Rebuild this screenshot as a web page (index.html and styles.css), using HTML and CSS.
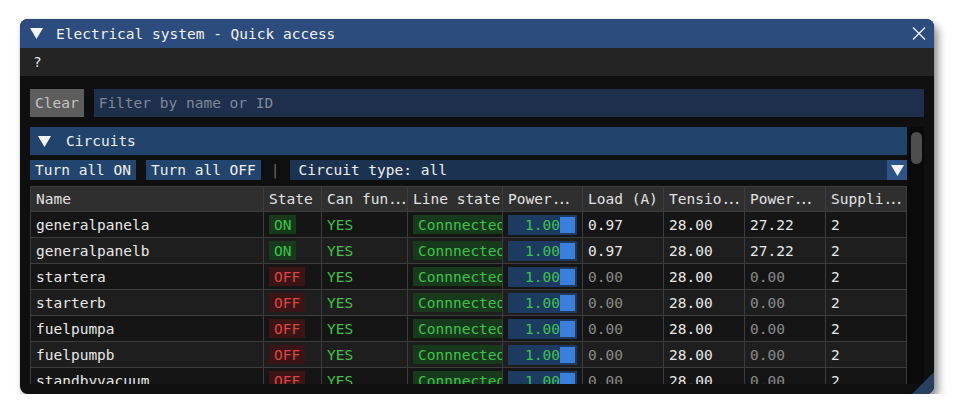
FILE: index.html
```html
<!DOCTYPE html>
<html>
<head>
<meta charset="utf-8">
<link rel="stylesheet" href="styles.css">
</head>
<body>
<div class="page">
  <div class="window">
    <div class="titlebar">
      <svg class="tri" width="13" height="11" viewBox="0 0 13 11"><polygon points="0,0 13,0 6.5,11" fill="#f4f4f4"/></svg>
      <span class="title">Electrical system - Quick access</span>
      <svg class="close" width="14" height="13" viewBox="0 0 14 13"><path d="M1 0.5 L13 12.5 M13 0.5 L1 12.5" stroke="#f0f0f0" stroke-width="1.3" fill="none"/></svg>
    </div>
    <div class="menubar"><span>?</span></div>
    <div class="content">
      <div class="filter-row">
        <div class="btn-clear">Clear</div>
        <div class="filter-input">Filter by name or ID</div>
      </div>
      <div class="child">
        <div class="child-main">
          <div class="section-header">
            <svg class="tri" width="13" height="11" viewBox="0 0 13 11"><polygon points="0,0 13,0 6.5,11" fill="#f4f4f4"/></svg>
            <span class="section-title">Circuits</span>
          </div>
          <div class="toolbar">
            <div class="tbtn">Turn all ON</div>
            <div class="tbtn">Turn all OFF</div>
            <div class="sep">|</div>
            <div class="combo">
              <div class="combo-label">Circuit type: all</div>
              <div class="combo-arrow"><svg width="13" height="11" viewBox="0 0 13 11"><polygon points="0,0 13,0 6.5,11" fill="#f4f4f4"/></svg></div>
            </div>
          </div>
          <div class="table">
            <div class="row head">
              <div class="cell">Name</div>
              <div class="cell">State</div>
              <div class="cell">Can fun<span class="ell">...</span></div>
              <div class="cell">Line state</div>
              <div class="cell">Power<span class="ell">...</span></div>
              <div class="cell">Load (A)</div>
              <div class="cell">Tensio<span class="ell">...</span></div>
              <div class="cell">Power<span class="ell">...</span></div>
              <div class="cell">Suppli<span class="ell">...</span></div>
            </div>
            <div class="row odd">
              <div class="cell">generalpanela</div>
              <div class="cell"><span class="badge on">ON</span></div>
              <div class="cell green">YES</div>
              <div class="cell"><span class="badge conn">Connnected</span></div>
              <div class="cell"><div class="slider">1.00<span class="handle"></span></div></div>
              <div class="cell">0.97</div>
              <div class="cell">28.00</div>
              <div class="cell">27.22</div>
              <div class="cell">2</div>
            </div>
            <div class="row even">
              <div class="cell">generalpanelb</div>
              <div class="cell"><span class="badge on">ON</span></div>
              <div class="cell green">YES</div>
              <div class="cell"><span class="badge conn">Connnected</span></div>
              <div class="cell"><div class="slider">1.00<span class="handle"></span></div></div>
              <div class="cell">0.97</div>
              <div class="cell">28.00</div>
              <div class="cell">27.22</div>
              <div class="cell">2</div>
            </div>
            <div class="row odd">
              <div class="cell">startera</div>
              <div class="cell"><span class="badge off">OFF</span></div>
              <div class="cell green">YES</div>
              <div class="cell"><span class="badge conn">Connnected</span></div>
              <div class="cell"><div class="slider">1.00<span class="handle"></span></div></div>
              <div class="cell dim">0.00</div>
              <div class="cell">28.00</div>
              <div class="cell dim">0.00</div>
              <div class="cell">2</div>
            </div>
            <div class="row even">
              <div class="cell">starterb</div>
              <div class="cell"><span class="badge off">OFF</span></div>
              <div class="cell green">YES</div>
              <div class="cell"><span class="badge conn">Connnected</span></div>
              <div class="cell"><div class="slider">1.00<span class="handle"></span></div></div>
              <div class="cell dim">0.00</div>
              <div class="cell">28.00</div>
              <div class="cell dim">0.00</div>
              <div class="cell">2</div>
            </div>
            <div class="row odd">
              <div class="cell">fuelpumpa</div>
              <div class="cell"><span class="badge off">OFF</span></div>
              <div class="cell green">YES</div>
              <div class="cell"><span class="badge conn">Connnected</span></div>
              <div class="cell"><div class="slider">1.00<span class="handle"></span></div></div>
              <div class="cell dim">0.00</div>
              <div class="cell">28.00</div>
              <div class="cell dim">0.00</div>
              <div class="cell">2</div>
            </div>
            <div class="row even">
              <div class="cell">fuelpumpb</div>
              <div class="cell"><span class="badge off">OFF</span></div>
              <div class="cell green">YES</div>
              <div class="cell"><span class="badge conn">Connnected</span></div>
              <div class="cell"><div class="slider">1.00<span class="handle"></span></div></div>
              <div class="cell dim">0.00</div>
              <div class="cell">28.00</div>
              <div class="cell dim">0.00</div>
              <div class="cell">2</div>
            </div>
            <div class="row odd">
              <div class="cell">standbyvacuum</div>
              <div class="cell"><span class="badge off">OFF</span></div>
              <div class="cell green">YES</div>
              <div class="cell"><span class="badge conn">Connnected</span></div>
              <div class="cell"><div class="slider">1.00<span class="handle"></span></div></div>
              <div class="cell dim">0.00</div>
              <div class="cell">28.00</div>
              <div class="cell dim">0.00</div>
              <div class="cell">2</div>
            </div>
          </div>
        </div>
        <div class="scrollbar"><div class="thumb"></div></div>
      </div>
    </div>
    <div class="grip"></div>
  </div>
</div>
</body>
</html>
```
FILE: styles.css
```css
* { box-sizing: border-box; }
body {
  margin: 0;
  background: #ffffff;
  font-family: "DejaVu Sans Mono", "Liberation Mono", monospace;
  font-size: 14.5px;
}
.page { padding: 19px 0 0 20px; }
.window {
  position: relative;
  width: 914px;
  height: 375px;
  background: #0f0f0f;
  border-radius: 8px;
  overflow: hidden;
  box-shadow: 0 0 1px rgba(0, 0, 0, 0.35), 4px 6px 9px rgba(0, 0, 0, 0.45);
  display: flex;
  flex-direction: column;
}
.titlebar {
  height: 29px;
  flex-shrink: 0;
  background: #2b4c7c;
  display: flex;
  align-items: center;
  padding: 0 8px 0 10px;
  color: #f2f2f2;
}
.title { margin-left: 13px; flex: 1; }
.menubar {
  height: 28px;
  flex-shrink: 0;
  background: #242424;
  display: flex;
  align-items: center;
  padding-left: 13px;
  color: #e6e6e6;
}
.content {
  padding: 13px 10px 10px;
  display: flex;
  flex-direction: column;
  gap: 10px;
}
.filter-row { display: flex; height: 28px; gap: 10px; }
.btn-clear {
  background: #5d5d5d;
  color: #c4c4c4;
  padding: 0 5px;
  display: flex;
  align-items: center;
}
.filter-input {
  flex: 1;
  background: #1d2f4b;
  color: #7f8899;
  padding-left: 5px;
  display: flex;
  align-items: center;
}
.child { height: 257px; display: flex; overflow: hidden; }
.child-main { width: 877px; display: flex; flex-direction: column; flex-shrink: 0; }
.scrollbar {
  width: 17px;
  background: #0a0a0a;
  padding: 5px 2px 0 4px;
}
.thumb { width: 11px; height: 32px; border-radius: 6px; background: #4e4e4e; }
.section-header {
  height: 28px;
  flex-shrink: 0;
  background: #22436c;
  display: flex;
  align-items: center;
  padding-left: 8px;
  color: #eeeeee;
}
.section-title { margin-left: 15px; }
.toolbar {
  margin-top: 5px;
  height: 20px;
  flex-shrink: 0;
  display: flex;
  gap: 10px;
}
.tbtn {
  background: #22456f;
  color: #f0f0f0;
  padding: 0 5px;
  display: flex;
  align-items: center;
}
.sep { color: #6a6a6a; display: flex; align-items: center; }
.combo { flex: 1; display: flex; background: #1c3251; }
.combo-label { flex: 1; padding-left: 9px; display: flex; align-items: center; color: #eeeeee; }
.combo-arrow {
  width: 20px;
  background: #2c5489;
  display: flex;
  align-items: center;
  justify-content: center;
}
.table { margin-top: 6px; border-left: 1px solid #3c3c3c; flex-shrink: 0; }
.row {
  display: grid;
  grid-template-columns: 233px 58px 86px 95px 80px 81px 81px 81px 81px;
  height: 26px;
  border-bottom: 1px solid #3c3c3c;
}
.row.head { background: #2f2f2f; border-top: 1px solid #3c3c3c; }
.row.odd { background: #151515; }
.row.even { background: #1e1e1e; }
.cell {
  border-right: 1px solid #3c3c3c;
  padding: 0 5px;
  display: flex;
  align-items: center;
  overflow: hidden;
  white-space: nowrap;
  color: #e8e8e8;
}
.ell { letter-spacing: -3px; }
.head .cell { color: #e2e2e2; }
.cell.green { color: #3fc24c; }
.cell.dim { color: #8a8a8a; }
.badge {
  height: 19px;
  padding: 0 5px;
  display: flex;
  align-items: center;
  flex-shrink: 0;
}
.badge.on, .badge.conn { background: #173a1c; color: #3fc24c; }
.badge.off { background: #3b1515; color: #dc4545; }
.slider {
  position: relative;
  width: 69px;
  height: 20px;
  flex-shrink: 0;
  background: #1d3a61;
  color: #3fc24c;
  display: flex;
  align-items: center;
  justify-content: center;
}
.handle {
  position: absolute;
  right: 2px;
  top: 2px;
  bottom: 2px;
  width: 15px;
  background: #3b7fdd;
}
.grip {
  position: absolute;
  right: 0;
  bottom: 0;
  width: 22px;
  height: 22px;
  background: #27405f;
  clip-path: polygon(100% 0, 100% 100%, 0 100%);
}
```
